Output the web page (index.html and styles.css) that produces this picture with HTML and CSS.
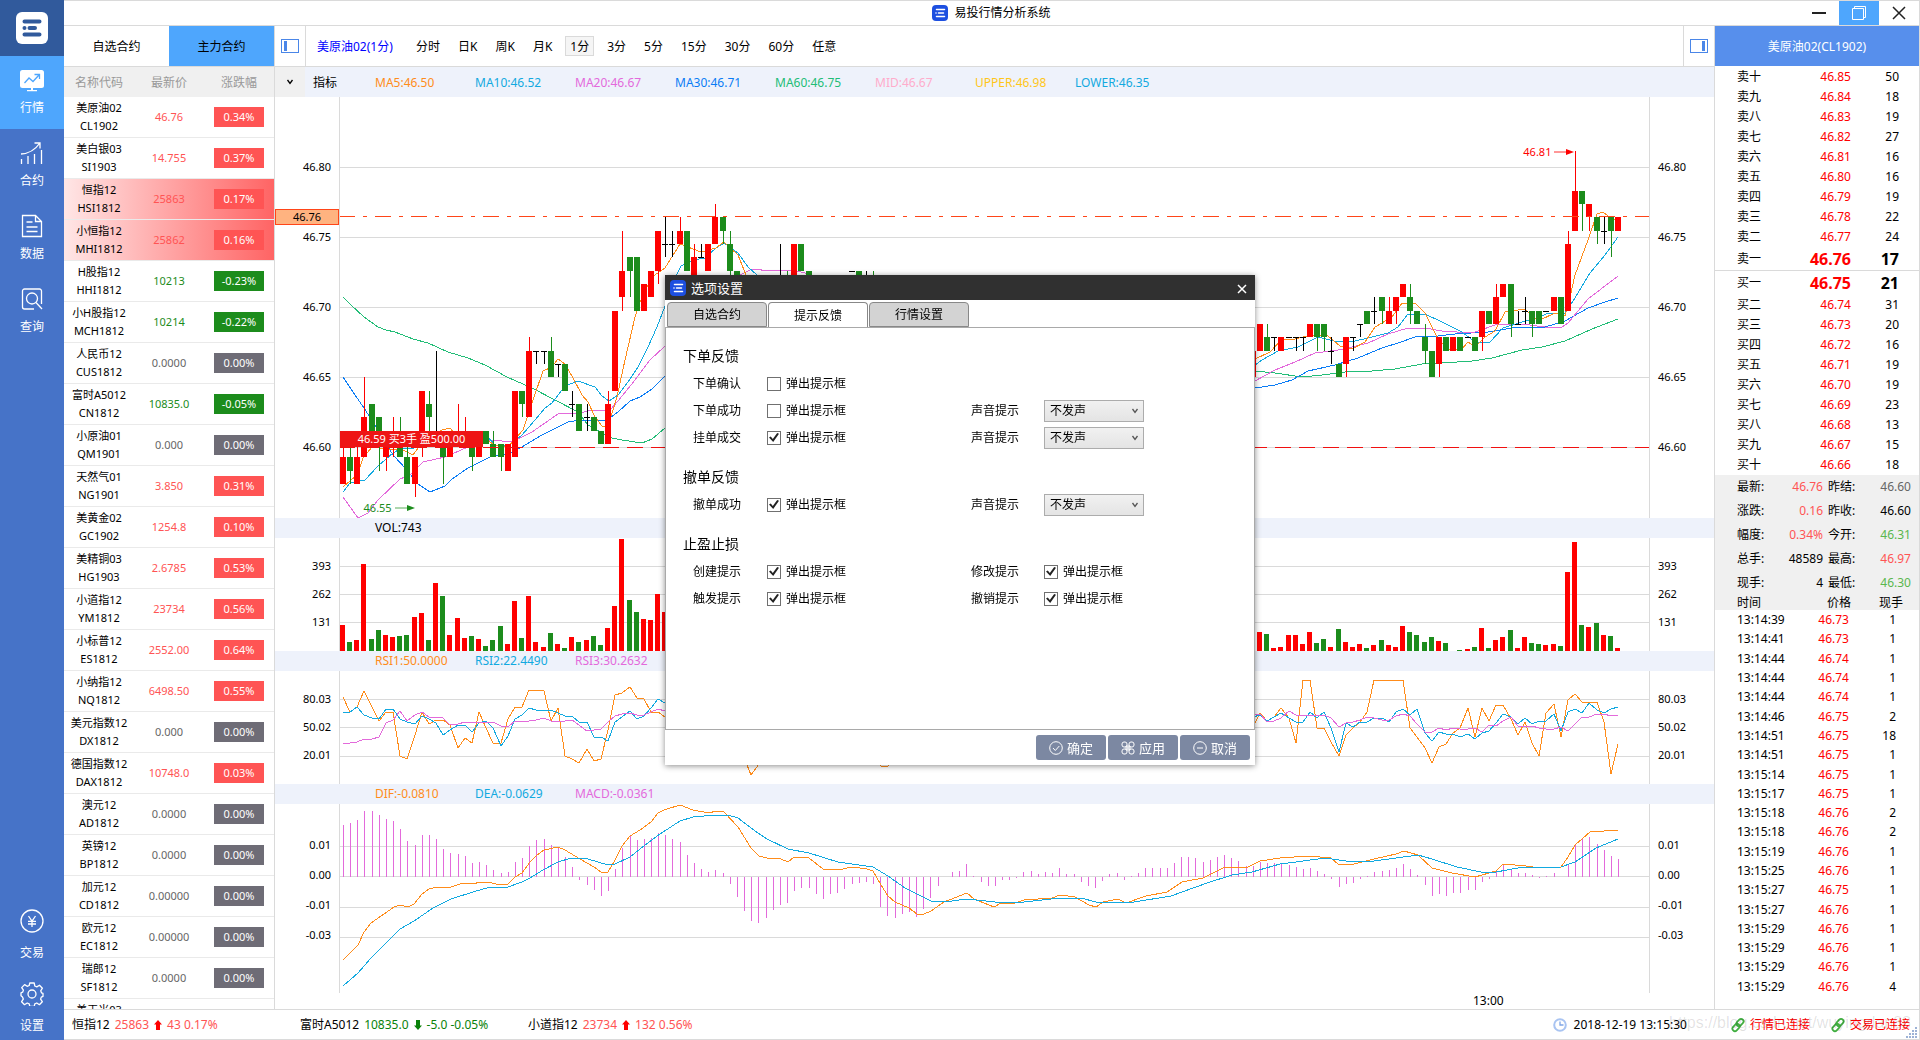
FILE: index.html
```html
<!DOCTYPE html>
<html lang="zh-CN">
<head>
<meta charset="utf-8">
<title>易投行情分析系统</title>
<link rel="stylesheet" href="styles.css">
</head>
<body>
<svg class="sprite" aria-hidden="true">
  <symbol id="brand" viewBox="0 0 16 16">
    <rect width="16" height="16" rx="4" fill="#1d4fe0"/>
    <path d="M4.500 4.500h8M6.500 8h5M4.500 11.500h8" stroke="#fff" stroke-width="1.500" stroke-linecap="round"/>
    <circle cx="4" cy="8" r="0.800" fill="#fff"/>
  </symbol>
  <symbol id="link" viewBox="0 0 16 16">
    <g fill="none" stroke="#3fae3f" stroke-width="1.800">
      <rect x="7.500" y="1.500" width="5" height="8" rx="2.500" transform="rotate(45 10 5.500)"/>
      <rect x="3.500" y="6.500" width="5" height="8" rx="2.500" transform="rotate(45 6 10.500)"/>
    </g>
  </symbol>
  <symbol id="up" viewBox="0 0 8 10"><path d="M4 0l4 4.500H6V10H2V4.500H0z" fill="#f00"/></symbol>
  <symbol id="down" viewBox="0 0 8 10"><path d="M4 10l4-4.500H6V0H2v5.500H0z" fill="#0a820a"/></symbol>
  <symbol id="chevron" viewBox="0 0 8 6"><path d="M1.500 1L4 4.500 6.500 1" fill="none" stroke="currentColor" stroke-width="1.300"/></symbol>
</svg>

<div class="app">
  <nav class="rail">
    <div class="rail-logo">
      <svg width="32" height="32" viewBox="0 0 32 32"><rect width="32" height="32" rx="6" fill="#fff"/><path d="M8.500 9.500h15M13.500 16h5.500M8.500 22.500h15" stroke="#315a9c" stroke-width="4" stroke-linecap="round"/><circle cx="8.500" cy="16" r="2" fill="#315a9c"/></svg>
    </div>
    <a class="rail-item active" href="#quotes">
      <svg viewBox="0 0 24 24"><rect y="2" width="24" height="18" rx="2.500" fill="#fff"/><path d="M11 20h2v2h4v1.200H7V22h4z" fill="#fff"/><path d="M4.500 15l4.500-5 4 3.500 6-6.500M14.500 6.500h5v4.500" fill="none" stroke="#4ea6fd" stroke-width="1.300"/></svg>
      <span>行情</span>
    </a>
    <a class="rail-item" href="#contracts">
      <svg viewBox="0 0 24 24" fill="none" stroke="#fff" stroke-width="1.300"><path d="M1.500 23v-5M8 23v-8M14.500 23V13M21.500 23V9M1 13C9 12.500 15 9 19.500 2.500M14.500 2h5.500v5.500"/></svg>
      <span>合约</span>
    </a>
    <a class="rail-item" href="#data">
      <svg viewBox="0 0 24 24" fill="none" stroke="#fff" stroke-width="1.300"><path d="M2.500 1.500h13l6 6v15h-19zM15.500 1.500v6h6M6.500 8h6M6.500 13h11M6.500 17.500h11"/></svg>
      <span>数据</span>
    </a>
    <a class="rail-item" href="#search">
      <svg viewBox="0 0 24 24" fill="none" stroke="#fff" stroke-width="1.300"><path d="M21.500 17V4a2 2 0 0 0-2-2h-15a2 2 0 0 0-2 2v16a2 2 0 0 0 2 2H14"/><circle cx="12" cy="11.500" r="5.500"/><path d="M16 15.500l6 6.500"/></svg>
      <span>查询</span>
    </a>
    <div class="rail-foot">
      <a class="rail-item" href="#trade">
        <svg viewBox="0 0 24 24" fill="none" stroke="#fff" stroke-width="1.300"><circle cx="12" cy="12" r="11"/><path d="M8.500 7l3.500 5 3.500-5M12 12v6M8 12.300h8M8 15h8"/></svg>
        <span>交易</span>
      </a>
      <a class="rail-item" href="#settings">
        <svg viewBox="0 0 24 24" fill="none" stroke="#fff" stroke-width="1.300"><circle cx="12" cy="12" r="4"/><path d="M9.800 1h4.400l.6 3 2 .9 2.700-1.700 2.900 3-1.700 2.600.8 2 1.500.6v3l-1.700.7-.7 2 1.700 2.600-2.900 3-2.600-1.700-2 .8-.6 2.600H9.800l-.6-2.600-2-.8-2.700 1.700-2.900-3 1.700-2.600-.8-2L1 13.800v-3l1.600-.6.8-2L1.700 5.600l2.900-3 2.600 1.700 2-.8z" stroke-linejoin="round"/></svg>
        <span>设置</span>
      </a>
    </div>
  </nav>

  <div class="window">
    <header class="titlebar">
      <h1><svg width="16" height="16"><use href="#brand"/></svg>易投行情分析系统</h1>
      <div class="window-controls">
        <button type="button" aria-label="最小化"><svg width="16" height="16"><path d="M1 8h14" stroke="#222" stroke-width="2"/></svg></button>
        <button type="button" class="restore" aria-label="还原"><svg width="16" height="16" fill="none" stroke="#fff"><path d="M1.500 3.500h11v11h-11zM3.500 3.500v-2h11v11h-2"/></svg></button>
        <button type="button" aria-label="关闭"><svg width="16" height="16"><path d="M2 2l12 12M14 2L2 14" stroke="#222" stroke-width="1.500"/></svg></button>
      </div>
    </header>

    <div class="workspace">
      <aside class="watchlist">
        <div class="list-tabs">
          <button type="button">自选合约</button>
          <button type="button" class="active">主力合约</button>
        </div>
        <div class="list-scroll">
          <table class="quotes">
            <thead><tr><th>名称代码</th><th>最新价</th><th>涨跌幅</th></tr></thead>
            <tbody id="quotes"></tbody>
          </table>
        </div>
      </aside>

      <main class="charts">
        <div class="toolbar">
          <button type="button" class="panel-toggle" aria-label="左侧面板"><svg width="18" height="14" viewBox="0 0 18 14"><rect x="0.500" y="0.500" width="17" height="13" fill="#fff" stroke="#4a86e8"/><path d="M3 2h3v10H3z" fill="#4a86e8"/></svg></button>
          <span class="symbol">美原油02(1分)</span>
          <div class="periods">
            <button type="button">分时</button>
            <button type="button">日K</button>
            <button type="button">周K</button>
            <button type="button">月K</button>
            <button type="button" class="active">1分</button>
            <button type="button">3分</button>
            <button type="button">5分</button>
            <button type="button">15分</button>
            <button type="button">30分</button>
            <button type="button">60分</button>
            <button type="button">任意</button>
          </div>
          <button type="button" class="panel-toggle right" aria-label="右侧面板"><svg width="18" height="14" viewBox="0 0 18 14"><rect x="0.500" y="0.500" width="17" height="13" fill="#fff" stroke="#4a86e8"/><path d="M12 2h3v10h-3z" fill="#4a86e8"/></svg></button>
        </div>

        <div class="indicators">
          <button type="button" class="indicator-menu" aria-label="选择指标"><svg width="8" height="6"><use href="#chevron"/></svg></button>
          <span class="indicator-label">指标</span>
          <span class="legend orange">MA5:46.50</span>
          <span class="legend cyan">MA10:46.52</span>
          <span class="legend magenta">MA20:46.67</span>
          <span class="legend blue">MA30:46.71</span>
          <span class="legend green">MA60:46.75</span>
          <span class="legend pink">MID:46.67</span>
          <span class="legend yellow">UPPER:46.98</span>
          <span class="legend cyan">LOWER:46.35</span>
        </div>
        <section class="pane price-pane">
          <div class="axis"><span>46.80</span><span>46.75</span><span>46.70</span><span>46.65</span><span>46.60</span><b class="last-price">46.76</b></div>
          <div class="plot">
            <svg id="price" viewBox="340 97 1309 421" preserveAspectRatio="none"></svg>
            <span class="position">46.59 买3手 盈500.00</span>
            <span class="mark low">46.55 <svg width="20" height="8"><path d="M0 4h14" stroke="#5aae5a"/><path d="M12 1l8 3-8 3z" fill="#1c8c1c"/></svg></span>
            <span class="mark high">46.81 <svg width="20" height="8"><path d="M0 4h14" stroke="#ff3030"/><path d="M12 1l8 3-8 3z" fill="#f00"/></svg></span>
          </div>
          <div class="axis right"><span>46.80</span><span>46.75</span><span>46.70</span><span>46.65</span><span>46.60</span></div>
        </section>

        <div class="pane-head"><span class="legend">VOL:743</span></div>
        <section class="pane volume-pane">
          <div class="axis"><span>393</span><span>262</span><span>131</span></div>
          <div class="plot"><svg id="volume" viewBox="340 538 1309 113" preserveAspectRatio="none"></svg></div>
          <div class="axis right"><span>393</span><span>262</span><span>131</span></div>
        </section>

        <div class="pane-head"><span class="legend orange">RSI1:50.0000</span><span class="legend cyan">RSI2:22.4490</span><span class="legend magenta">RSI3:30.2632</span></div>
        <section class="pane rsi-pane">
          <div class="axis"><span>80.03</span><span>50.02</span><span>20.01</span></div>
          <div class="plot"><svg id="rsi" viewBox="340 671 1309 113" preserveAspectRatio="none"></svg></div>
          <div class="axis right"><span>80.03</span><span>50.02</span><span>20.01</span></div>
        </section>

        <div class="pane-head"><span class="legend orange">DIF:-0.0810</span><span class="legend cyan">DEA:-0.0629</span><span class="legend magenta">MACD:-0.0361</span></div>
        <section class="pane macd-pane">
          <div class="axis"><span>0.01</span><span>0.00</span><span>-0.01</span><span>-0.03</span></div>
          <div class="plot"><svg id="macd" viewBox="340 804 1309 189" preserveAspectRatio="none"></svg></div>
          <div class="axis right"><span>0.01</span><span>0.00</span><span>-0.01</span><span>-0.03</span></div>
        </section>
        <div class="time-axis"><span>13:00</span></div>
      </main>

      <aside class="depth">
        <h2>美原油02(CL1902)</h2>
        <table class="book"><tbody id="asks"></tbody><tbody id="bids"></tbody></table>
        <table class="stats">
          <tbody>
            <tr><th>最新:</th><td class="up">46.76</td><th>昨结:</th><td class="flat">46.60</td></tr>
            <tr><th>涨跌:</th><td class="up">0.16</td><th>昨收:</th><td>46.60</td></tr>
            <tr><th>幅度:</th><td class="up">0.34%</td><th>今开:</th><td class="down">46.31</td></tr>
            <tr><th>总手:</th><td>48589</td><th>最高:</th><td class="up">46.97</td></tr>
            <tr><th>现手:</th><td>4</td><th>最低:</th><td class="down">46.30</td></tr>
          </tbody>
        </table>
        <div class="tick-area">
          <table class="ticks">
            <thead><tr><th>时间</th><th>价格</th><th>现手</th></tr></thead>
            <tbody id="ticks"></tbody>
          </table>
        </div>
      </aside>
    </div>

    <footer class="statusbar">
      <div class="index">恒指12 <span class="rise">25863</span><svg width="8" height="10"><use href="#up"/></svg><span class="rise">43 0.17%</span></div>
      <div class="index">富时A5012 <span class="fall">10835.0</span><svg width="8" height="10"><use href="#down"/></svg><span class="fall">-5.0 -0.05%</span></div>
      <div class="index">小道指12 <span class="rise">23734</span><svg width="8" height="10"><use href="#up"/></svg><span class="rise">132 0.56%</span></div>
      <div class="clock"><svg width="14" height="14" fill="none"><circle cx="7" cy="7" r="5.800" stroke="#a9c4f2" stroke-width="2"/><path d="M7 3.500V7h3.500" stroke="#7fa5e6" stroke-width="1.300"/></svg>2018-12-19 13:15:30</div>
      <div class="link"><svg width="16" height="16"><use href="#link"/></svg>行情已连接</div>
      <div class="link"><svg width="16" height="16"><use href="#link"/></svg>交易已连接</div>
      <span class="watermark">https://blog.csdn.net/wuyingdan88</span>
      <svg class="grip" width="11" height="11" fill="#9db2d6"><path d="M9 0h2v2H9zM6 3h2v2H6zM9 3h2v2H9zM3 6h2v2H3zM6 6h2v2H6zM9 6h2v2H9zM0 9h2v2H0zM3 9h2v2H3zM6 9h2v2H6zM9 9h2v2H9z"/></svg>
    </footer>
  </div>
</div>

<div class="overlay">
  <form class="dialog" role="dialog" aria-labelledby="dialog-title">
    <header class="dialog-title">
      <svg width="16" height="16"><use href="#brand"/></svg>
      <h2 id="dialog-title">选项设置</h2>
      <button type="button" aria-label="关闭"><svg width="10" height="10"><path d="M1 1l8 8M9 1L1 9" stroke="#fff" stroke-width="1.500"/></svg></button>
    </header>
    <div class="dialog-tabs">
      <button type="button">自选合约</button>
      <button type="button" class="active">提示反馈</button>
      <button type="button">行情设置</button>
    </div>
    <div class="dialog-body">
      <h3>下单反馈</h3>
      <div class="option"><span>下单确认</span><label><input type="checkbox">弹出提示框</label></div>
      <div class="option"><span>下单成功</span><label><input type="checkbox">弹出提示框</label><label for="sound1">声音提示</label><div class="select"><select id="sound1"><option>不发声</option></select><svg width="8" height="6"><use href="#chevron"/></svg></div></div>
      <div class="option"><span>挂单成交</span><label><input type="checkbox" checked>弹出提示框</label><label for="sound2">声音提示</label><div class="select"><select id="sound2"><option>不发声</option></select><svg width="8" height="6"><use href="#chevron"/></svg></div></div>
      <h3>撤单反馈</h3>
      <div class="option"><span>撤单成功</span><label><input type="checkbox" checked>弹出提示框</label><label for="sound3">声音提示</label><div class="select"><select id="sound3"><option>不发声</option></select><svg width="8" height="6"><use href="#chevron"/></svg></div></div>
      <h3>止盈止损</h3>
      <div class="option"><span>创建提示</span><label><input type="checkbox" checked>弹出提示框</label><span>修改提示</span><label><input type="checkbox" checked>弹出提示框</label></div>
      <div class="option"><span>触发提示</span><label><input type="checkbox" checked>弹出提示框</label><span>撤销提示</span><label><input type="checkbox" checked>弹出提示框</label></div>
    </div>
    <footer class="dialog-actions">
      <button type="button"><svg width="14" height="14" fill="none" stroke="#fff"><circle cx="7" cy="7" r="6.300"/><path d="M4 7l2.300 2.500L10.300 5"/></svg>确定</button>
      <button type="button"><svg width="14" height="14" fill="none" stroke="#fff"><rect x="1" y="1" width="5" height="5" rx="2"/><rect x="8" y="1" width="5" height="5" rx="2"/><rect x="1" y="8" width="5" height="5" rx="2"/><rect x="8" y="8" width="5" height="5" rx="2"/><path d="M6 4v6M8 4v6M4 6h6M4 8h6"/></svg>应用</button>
      <button type="button"><svg width="14" height="14" fill="none" stroke="#fff"><circle cx="7" cy="7" r="6.300"/><path d="M4 7h6"/></svg>取消</button>
    </footer>
  </form>
</div>
<script src="script.js"></script>
</body>
</html>
```

FILE: styles.css
```css
* { box-sizing: border-box; }

body {
  margin: 0;
  color: #000;
  background: #fff;
  font: 12px/20px "Noto Sans", "Noto Sans CJK SC", sans-serif;
}

h1, h2, h3 { margin: 0; font-size: inherit; font-weight: normal; }
button { padding: 0; border: 0; background: none; color: inherit; font: inherit; }
table { width: 100%; border-spacing: 0; table-layout: fixed; }
th, td { padding: 0; font-weight: normal; }
svg { flex: none; }
.sprite { position: absolute; width: 0; height: 0; }

.app { display: flex; height: 100vh; overflow: hidden; }

/* navigation rail */
.rail { display: flex; flex-direction: column; flex: none; width: 64px; background: #4673c8; }
.rail-logo { display: grid; place-items: center; height: 56px; background: #315a9c; }
.rail-item {
  display: flex;
  flex-direction: column;
  align-items: center;
  gap: 6px;
  padding: 12px 0 11px;
  color: #fff;
  text-decoration: none;
}
.rail-item svg { width: 24px; height: 24px; }
.rail-item.active { background: #4ea6fd; }
.rail-foot { display: grid; gap: 11px; margin-top: auto; padding-bottom: 4px; }
.rail-foot .rail-item { gap: 10px; padding: 8px 0 0; }

/* window frame */
.window {
  display: flex;
  flex-direction: column;
  flex: 1;
  min-width: 0;
  border: solid #dadada;
  border-width: 1px 1px 1px 0;
}
.titlebar {
  display: grid;
  grid-template-columns: 1fr auto 1fr;
  height: 25px;
  border-bottom: 1px solid #dadada;
}
.titlebar h1 { grid-column: 2; display: flex; align-items: center; gap: 6px; }
.window-controls { display: flex; justify-content: flex-end; }
.window-controls button { display: grid; place-items: center; width: 40px; }
.window-controls .restore { background: #4ea6fd; }
.workspace { display: flex; flex: 1; min-height: 0; }

/* contract list */
.watchlist { display: flex; flex-direction: column; flex: none; width: 211px; border-right: 1px solid #dadada; }
.list-tabs { display: grid; grid-template-columns: 1fr 1fr; flex: none; height: 41px; border-bottom: 1px solid #dadada; }
.list-tabs button { padding-top: 2px; }
.list-tabs .active { background: #4ea6fd; }
.list-scroll { flex: 1; min-height: 0; overflow: hidden; }
.quotes { font-size: 11px; text-align: center; }
.quotes thead th { height: 30px; padding-top: 2px; background: #f0f0f0; color: #999; font-size: 12px; }
.quotes tbody td { height: 41px; border-bottom: 1px solid #eaeaea; }
.quotes td { line-height: 18px; }
.quotes td:first-child span { display: block; }
.quotes .pct { display: block; width: 50px; margin: 0 auto; color: #fff; line-height: 20px; background: #6e6c76; }
.quotes .flat { color: #666; }
.quotes .up { color: #ff5454; }
.quotes .down { color: #1c8c1c; }
.quotes .up + td .pct { background: #ff5454; }
.quotes .down + td .pct { background: #1c8c1c; }
.quotes .flash { background: linear-gradient(90deg, #ffe6e6, #ff6464); }

/* chart column */
.charts { display: flex; flex-direction: column; flex: 1; min-width: 0; border-right: 1px solid #dadada; }
.toolbar { display: flex; align-items: center; height: 41px; border-bottom: 1px solid #dadada; }
.panel-toggle { display: grid; place-items: center; align-self: stretch; width: 31px; border-right: 1px solid #dadada; }
.panel-toggle.right { margin-left: auto; border: solid #dadada; border-width: 0 0 0 1px; }
.symbol { width: 105px; padding: 2px 0 0 11px; color: #00f; white-space: nowrap; }
.periods { display: flex; gap: 8px; }
.periods button { padding: 2px 4px 0; border: 1px solid transparent; line-height: 16px; }
.periods .active { border-color: #dadada; background: #f5f5f5; }

.indicators { display: flex; height: 30px; line-height: 32px; background: #eef2fb; }
.indicator-menu { display: grid; place-items: center; width: 30px; background: #f0f0f0; }
.indicator-label { width: 70px; padding-left: 8px; }
.pane-head { display: flex; height: 20px; padding-left: 100px; background: #eef2fb; }
.legend { width: 100px; white-space: nowrap; }
.orange { color: #ff8c1a; }
.cyan { color: #12a9e0; }
.magenta { color: #e36adb; }
.blue { color: #0a7cf5; }
.green { color: #22bd77; }
.pink { color: #ffaccb; }
.yellow { color: #ffc61a; }

.pane { display: grid; grid-template-columns: 64px 1fr 64px; }
.axis { position: relative; display: flex; flex-direction: column; padding-right: 8px; font-size: 11px; text-align: right; }
.axis.right { padding: 0 0 0 8px; text-align: left; }
.price-pane { height: 421px; }
.volume-pane, .rsi-pane { height: 113px; }
.macd-pane { height: 189px; }
.price-pane .axis { padding-top: 35px; line-height: 70px; }
.volume-pane .axis, .rsi-pane .axis { padding-top: 14px; line-height: 28px; }
.macd-pane .axis { padding-top: 26px; line-height: 30px; }
.last-price {
  position: absolute;
  top: 112px;
  left: 0;
  width: 64px;
  border: 1px solid #ff4518;
  background: #ffb380;
  font-weight: normal;
  line-height: 14px;
  text-align: center;
}
.plot { position: relative; border: solid #dadada; border-width: 0 1px; overflow: hidden; }
.plot > svg { display: block; width: 100%; height: 100%; shape-rendering: crispEdges; }
.position {
  position: absolute;
  top: 334px;
  left: 0;
  width: 143px;
  color: #fff;
  background: #ee1515;
  font-size: 11px;
  line-height: 16px;
  text-align: center;
}
.mark { position: absolute; font-size: 11px; line-height: 16px; white-space: nowrap; }
.mark.low { top: 403px; left: 1.8%; color: #1c8c1c; }
.mark.high { top: 47px; left: 90.4%; color: #f00; }
.time-axis { flex: 1; padding: 0 64px; line-height: 16px; }
.time-axis span { margin-left: 86.5%; }

.grid { stroke: #dadada; }
.line { fill: none; stroke: currentColor; }
.red { fill: #f00; }
.dark { fill: #000; }
.forest { fill: #1c8c1c; }
.violet { fill: #e36adb; }
.last-line { stroke: #ff4518; stroke-dasharray: 16 8 4 8; }
.cost-line { stroke: #f01010; stroke-dasharray: 16 8; }

/* order book */
.depth { display: flex; flex-direction: column; flex: none; width: 204px; }
.depth h2 { flex: none; height: 40px; margin-bottom: 1px; color: #fff; line-height: 42px; text-align: center; background: #578fec; }
.book td { height: 20px; text-align: right; }
.book td:first-child, .ticks td:first-child, .ticks th:first-child { padding-left: 22px; text-align: left; }
.book td:nth-child(1) { width: 60px; }
.book td:nth-child(2) { width: 76px; color: #f00; }
.book td:nth-child(3) { padding-right: 20px; }
.book .best td { height: 24px; }
.book .best td + td { font-size: 16px; font-weight: bold; }
.book #asks .best td { border-bottom: 1px solid #dadada; }

.stats { background: #f0f0f0; }
.stats tr { height: 24px; }
.stats th { padding-left: 22px; text-align: left; }
.stats th:nth-child(1) { width: 54px; }
.stats td:nth-child(2) { width: 54px; }
.stats th:nth-child(3) { width: 40px; padding-left: 5px; }
.stats td { text-align: right; }
.stats td:last-child { padding-right: 8px; }
.stats .up { color: #ff5454; }
.stats .down { color: #5ab74e; }
.stats .flat { color: #666; }

.tick-area { flex: 1; min-height: 0; padding-bottom: 13px; }
.ticks { height: 100%; line-height: 15px; }
.ticks thead tr { height: 15px; background: #f0f0f0; }
.ticks th, .ticks td { text-align: right; }
.ticks th:first-child { width: 80px; }
.ticks th:nth-child(2) { width: 56px; }
.ticks th:last-child { padding-right: 16px; }
.ticks td:nth-child(2) { padding-right: 2px; color: #f00; }
.ticks td:last-child { padding-right: 23px; }

/* status bar */
.statusbar {
  position: relative;
  display: flex;
  align-items: center;
  flex: none;
  height: 30px;
  padding: 0 9px 0 8px;
  border-top: 1px solid #dadada;
  white-space: nowrap;
}
.index { display: flex; align-items: center; gap: 5px; width: 228px; }
.rise { color: #ff5454; }
.fall { color: #0a820a; }
.clock { display: flex; align-items: center; gap: 7px; margin-left: auto; margin-right: 43px; }
.link { display: flex; align-items: center; gap: 4px; color: #f00; }
.link + .link { margin-left: 20px; }
.watermark {
  position: absolute;
  right: 8px;
  top: 2px;
  color: rgba(0, 0, 0, 0.12);
  font: 16px/22px "Liberation Sans", sans-serif;
}
.grip { position: absolute; right: 2px; bottom: 1px; }

/* settings dialog */
.overlay { position: fixed; inset: 0; display: grid; place-items: center; }
.dialog {
  display: flex;
  flex-direction: column;
  width: 590px;
  min-height: 490px;
  background: #fff;
  box-shadow: 0 1px 6px rgba(0, 0, 0, 0.45);
}
.dialog-title { display: flex; align-items: center; gap: 5px; height: 25px; padding: 0 7px 0 5px; color: #fff; background: #303030; }
.dialog-title h2 { font-size: 13px; }
.dialog-title button { display: grid; place-items: center; width: 12px; height: 20px; margin-left: auto; padding-top: 2px; }
.dialog-tabs { display: flex; gap: 1px; padding: 2px 2px 0; }
.dialog-tabs button {
  width: 100px;
  height: 25px;
  border: 1px solid #888;
  border-radius: 4px 4px 0 0;
  background: #d3d3d3;
}
.dialog-tabs .active { padding-top: 2px; border-bottom: 0; background: #fff; }
.dialog-body { flex: 1; padding: 14px 17px; border: 1px solid #a9a9a9; }
.dialog-body h3 { font-size: 14px; line-height: 28px; }
.option + h3 { margin-top: 12px; }
.option { display: grid; grid-template-columns: 74px 204px 73px 100px; align-items: center; height: 27px; padding-left: 10px; }
.option label { display: flex; align-items: center; gap: 5px; }
.option input {
  display: grid;
  place-items: center;
  appearance: none;
  width: 14px;
  height: 14px;
  margin: 0;
  border: 1px solid #707070;
  background: #fff;
}
.option input:checked::before {
  content: "";
  width: 10px;
  height: 9px;
  background: #222;
  clip-path: polygon(0 50%, 18% 38%, 38% 68%, 82% 0, 100% 8%, 42% 100%);
}
.select { display: grid; align-items: center; color: #555; }
.select > * { grid-area: 1 / 1; }
.select select {
  appearance: none;
  width: 100px;
  height: 22px;
  padding: 0 5px;
  border: 1px solid #acacac;
  border-radius: 0;
  color: #000;
  background: linear-gradient(#f1f1f1, #e4e4e4);
  font: inherit;
}
.select svg { justify-self: end; margin-right: 5px; pointer-events: none; }
.dialog-actions { display: flex; justify-content: flex-end; gap: 2px; padding: 5px; }
.dialog-actions button {
  display: flex;
  align-items: center;
  justify-content: center;
  gap: 4px;
  width: 70px;
  height: 25px;
  border-radius: 3px;
  color: #fff;
  background: #7c88a2;
  font-size: 13px;
}
```

FILE: script.js
```js
// ---- contract list: name, code, price, change %, direction, flash ----
const quotes = [
  ['美原油02', 'CL1902', '46.76', '0.34%', 'up'],
  ['美白银03', 'SI1903', '14.755', '0.37%', 'up'],
  ['恒指12', 'HSI1812', '25863', '0.17%', 'up', 'flash'],
  ['小恒指12', 'MHI1812', '25862', '0.16%', 'up', 'flash'],
  ['H股指12', 'HHI1812', '10213', '-0.23%', 'down'],
  ['小H股指12', 'MCH1812', '10214', '-0.22%', 'down'],
  ['人民币12', 'CUS1812', '0.0000', '0.00%', 'flat'],
  ['富时A5012', 'CN1812', '10835.0', '-0.05%', 'down'],
  ['小原油01', 'QM1901', '0.000', '0.00%', 'flat'],
  ['天然气01', 'NG1901', '3.850', '0.31%', 'up'],
  ['美黄金02', 'GC1902', '1254.8', '0.10%', 'up'],
  ['美精铜03', 'HG1903', '2.6785', '0.53%', 'up'],
  ['小道指12', 'YM1812', '23734', '0.56%', 'up'],
  ['小标普12', 'ES1812', '2552.00', '0.64%', 'up'],
  ['小纳指12', 'NQ1812', '6498.50', '0.55%', 'up'],
  ['美元指数12', 'DX1812', '0.000', '0.00%', 'flat'],
  ['德国指数12', 'DAX1812', '10748.0', '0.03%', 'up'],
  ['澳元12', 'AD1812', '0.0000', '0.00%', 'flat'],
  ['英镑12', 'BP1812', '0.0000', '0.00%', 'flat'],
  ['加元12', 'CD1812', '0.00000', '0.00%', 'flat'],
  ['欧元12', 'EC1812', '0.00000', '0.00%', 'flat'],
  ['瑞郎12', 'SF1812', '0.0000', '0.00%', 'flat'],
  ['美玉米03', '', '', '', 'flat']
];
const put = (id, html) => { document.getElementById(id).innerHTML = html; };
put('quotes', quotes.map(([name, code, price, pct, dir, flash = '']) =>
  `<tr class="${flash}"><td><span>${name}</span><span>${code || '&nbsp;'}</span></td><td class="${dir}">${price}</td><td>${pct && `<span class="pct">${pct}</span>`}</td></tr>`).join(''));

// ---- order book ----
const digits = '一二三四五六七八九十';
const bookRow = (label, price, size, best) =>
  `<tr class="${best ? 'best' : ''}"><td>${label}</td><td>${price.toFixed(2)}</td><td>${size}</td></tr>`;
put('asks', [50, 18, 19, 27, 16, 16, 19, 22, 24, 17].map((size, i) =>
  bookRow('卖' + digits[9 - i], 46.85 - i / 100, size, i === 9)).join(''));
put('bids', [21, 31, 20, 16, 19, 19, 23, 13, 15, 18].map((size, i) =>
  bookRow('买' + digits[i], 46.75 - i / 100, size, i === 0)).join(''));

// ---- tick list ----
const ticks = `14:39 73 1,14:41 73 1,14:44 74 1,14:44 74 1,14:44 74 1,14:46 75 2,14:51 75 18,14:51 75 1,15:14 75 1,15:17 75 1,
15:18 76 2,15:18 76 2,15:19 76 1,15:25 76 1,15:27 75 1,15:27 76 1,15:29 76 1,15:29 76 1,15:29 76 1,15:29 76 4`;
put('ticks', ticks.split(',').map(row => {
  const [time, cents, size] = row.trim().split(' ');
  return `<tr><td>13:${time}</td><td>46.${cents}</td><td>${size}</td></tr>`;
}).join(''));

// ---- chart helpers ----
const LEFT = 339, RIGHT = 1650;
const x = i => Math.round(343 + i * 7.163);
const levelY = n => Math.round(484 - n * 40 / 3);
const fill = { R: 'red', G: 'forest', K: 'dark' };
const rect = (cls, left, top, width, height) => `<rect class="${cls}" x="${left}" y="${top}" width="${width}" height="${height}"/>`;
const hline = (y, cls = 'grid') => `<path class="${cls}" d="M${LEFT} ${y + 0.5}H${RIGHT}"/>`;
const line = (cls, points) => `<polyline class="line ${cls}" points="${points}"/>`;
const series = (cls, start, values) => line(cls, values.map((v, i) => `${x(start + i)},${v}`).join(' '));

// ---- candles: index, colour, body top, body bottom, high, low (tick levels) ----
const candles = `0R2,0,4,0 1G2,1,4,0 2R2,0,4,0 3R5,2,8,2 4G6,4,6,4 5G5,4,5,1 6R3,2,3,1 7R4,3,5,2 8G3,2,5,2 9G2,0,4,0 10R2,0,2,-1
11R7,3,7,2 12G6,5,7,4 13K4,4,10,4 14G3,2,4,0 15R3,2,4,2 16R4,3,6,3 17R4,3,5,3 18G3,2,4,1 19R4,2,4,2 20G4,3,4,3 21G3,2,4,2 22G3,2,3,1
23R3,1,3,1 24R7,2,7,2 25G7,6,7,5 26R10,5,11,5 27K10,10,10,9 28K10,10,10,9 29G10,8,11,8 30K9,9,9,8 31G9,7,9,7 32K6,6,7,5 33G6,4,6,4
34K5,5,6,4 35G5,4,5,4 36G4,3,4,3 37R6,3,7,3 38R13,7,13,7 39R16,14,19,13 40G17,16,17,14 41G17,13,17,13 42R15,13,15,13 43R16,14,16,14
44R19,16,19,15 45K18,18,20,17 46K18,18,19,17 47R19,18,20,18 48G19,16,19,16 49R17,15,18,15 50K17,17,18,17 51R18,16,18,16 52R20,18,21,18
53G20,19,20,18 54G18,16,19,15 55G16,14,16,14 61K15,15,18,14 62G15,14,16,14 63R18,15,18,15 64G18,16,18,16 65G16,14,16,14 71K16,16,16,16
72G16,14,16,14 73K15,15,16,14 74G15,14,16,14 127R10,8,10,8 128R12,10,12,10 129G11,10,12,10 130K11,11,11,10 131R11,10,11,10
132K11,11,11,11 133K11,11,11,10 134K11,11,11,10 135R12,11,12,11 136G12,11,12,10 137G12,11,12,10 138K10,10,11,9 139G9,8,9,8 140R11,9,11,8
141K11,11,11,10 142K12,12,12,11 143G13,12,13,12 144K13,13,14,12 145G14,13,14,12 146R13,12,14,12 147R14,13,14,12 148R15,14,15,14
149G14,13,15,12 150G13,12,13,12 151G11,10,12,9 152G10,8,10,8 153R11,9,11,8 154G11,10,11,10 155R11,10,11,10 156G11,10,11,10
157K11,11,11,11 158G11,10,11,10 159R13,11,13,10 160G13,12,13,12 161R14,12,15,12 162R15,14,15,14 163G15,12,15,11 164K12,12,13,12
165K13,13,14,12 166G13,12,13,11 167G13,12,13,12 168K13,13,13,13 169R14,13,14,13 170G14,12,14,12 171R18,13,19,13 172R22,19,25,19
173G22,21,22,19 174R21,20,21,19 175G20,19,20,18 176K19,19,20,18 177G20,19,20,17 178R20,19,20,19`;
const candleShapes = candles.split(/\s+/).map(text => {
  const [, i, colour, rest] = text.match(/^(\d+)([RGK])(.*)$/);
  const [top, bottom, high, low] = rest.split(',').map(n => levelY(+n));
  const cx = x(+i);
  const body = colour === 'K' ? rect('dark', cx - 3, top, 6, 1) : rect(fill[colour], cx - 3, top, 6, bottom - top);
  return body + rect(fill[colour], cx, high, 1, low - high);
}).join('');

put('price', [167, 237, 307, 377, 447].map(y => hline(y)).join('') +
  line('green', '343,297 350,304 364,317 378,327 386,330 395,332 413,339 428,343 448,352 468,358 485,365 507,377 532,388 555,400 578,412 588,425 602,433 612,438 622,440 642,443 652,439 665,428') +
  line('green', '1255,371 1275,373 1302,377 1322,375 1345,372 1372,371 1395,369 1422,364 1442,363 1472,361 1492,358 1522,350 1542,347 1565,341 1592,329 1618,319') +
  line('blue', '343,377 355,395 364,408 378,430 393,455 407,470 418,484 430,492 445,486 452,479 468,468 492,456 508,454 522,447 542,435 568,422 580,420 607,420 618,412 630,401 640,397 652,389 665,376') +
  line('blue', '1255,388 1275,385 1292,380 1308,371 1335,365 1358,358 1382,348 1398,343 1418,336 1438,336 1455,334 1488,332 1512,328 1545,327 1565,321 1588,308 1605,302 1618,298') +
  line('magenta', '343,497 358,518 368,513 378,500 400,479 410,475 423,462 445,457 468,447 492,440 512,442 532,432 558,414 580,413 592,410 610,410 618,401 635,380 650,360 665,346 740,275 752,269 771,271 793,270 805,273 815,280') +
  line('magenta', '1255,381 1275,370 1295,362 1315,353 1338,350 1352,347 1368,343 1388,334 1408,328 1425,328 1442,331 1472,333 1498,324 1522,324 1545,327 1562,327 1568,323 1588,299 1618,276') +
  line('cyan', '343,492 350,483 365,480 378,466 393,453 402,448 413,449 422,442 435,433 486,435 495,445 508,446 522,435 535,420 545,408 552,403 565,386 578,381 595,387 602,396 609,401 618,395 628,382 638,367 648,347 657,327 665,306 677,274 681,266 693,260 705,258 716,248 724,243 738,253 748,267 757,275 765,290') +
  line('cyan', '1255,365 1262,360 1278,351 1298,347 1318,337 1338,342 1355,341 1368,338 1388,333 1398,327 1408,314 1425,314 1442,322 1462,332 1475,342 1490,342 1503,328 1522,322 1535,319 1548,313 1565,313 1575,298 1590,273 1605,255 1618,237') +
  line('orange', '343,487 357,475 363,458 372,447 405,451 413,455 422,443 442,430 450,428 457,437 478,435 495,445 508,447 523,430 533,400 543,371 552,367 558,359 565,364 573,378 582,395 588,402 595,417 602,426 608,426 617,397 625,360 635,317 640,302 652,277 665,268 680,244 701,252 716,248 724,242 738,255 746,275') +
  line('orange', '1255,359 1270,352 1282,339 1295,339 1312,335 1328,336 1340,346 1352,349 1365,342 1375,327 1392,317 1402,303 1415,303 1425,313 1437,337 1448,350 1462,349 1468,342 1475,347 1485,337 1495,331 1505,312 1525,309 1538,321 1555,313 1565,316 1570,297 1575,275 1588,240 1597,214 1603,212 1608,216 1618,221') +
  candleShapes + hline(216, 'last-line') + hline(447, 'cost-line'));

// ---- volume: runs of coloured bar heights from a start index ----
const volumeRuns = {
  0: 'R26 G9 R11 R87 G12 G21 R16 R14 G15 G16 R34 R38 G11 R68 G55 R16 R33 R13 G15 R12 G5 G11 G25 R7 R50 G13 R55 R9 R4 G18 R7 G3 R14 G9 R11 G15 G6 R23 R45 R112 G51 G39 R32 R31 R57 R39',
  127: 'R7 R19 G17 R3 R4 R16 R16 R7 R19 G8 G12 R4 G22 R9 R4 R7 G3 R6 G11 R6 R4 R25 G19 G16 G9 G14 R10 G8 R0 G1 R2 G4 R23 G3 R11 R14 G21 R3 R14 G8 G7 R6 R7 G5 R79 R109 G26 R24 G28 R16 G15 R3'
};
put('volume', [566, 594, 622].map(y => hline(y)).join('') +
  Object.entries(volumeRuns).map(([start, run]) => run.split(' ').map((bar, i) => {
    const h = +bar.slice(1);
    return rect(fill[bar[0]], x(+start + i) - 3, 651 - h, 5, h);
  }).join('')).join(''));

// ---- RSI ----
put('rsi', [699, 727, 756].map(y => hline(y)).join('') +
  series('orange', 0, [697,712,707,691,707,721,712,712,756,759,735,712,724,720,720,725,748,738,743,712,728,743,743,719,707,707,690,690,691,721,708,756,759,763,749,761,759,730,695,693,687,698,699,712,712,717]) +
  line('orange', '745,760 751,775 759,764') + line('orange', '879,760 881,766 888,766 890,760') +
  series('orange', 127, [727,713,721,717,708,718,743,680,680,728,728,742,756,735,728,722,712,680,680,680,680,680,728,737,748,763,747,744,733,728,708,737,708,721,705,705,719,735,722,743,756,713,704,737,700,694,702,702,702,722,774,744]) +
  series('cyan', 0, [712,712,707,715,718,719,709,709,719,722,724,716,719,723,735,730,725,725,732,723,721,728,746,736,719,715,708,710,710,710,713,716,716,722,722,737,737,741,722,717,711,719,716,708,699,703]) +
  series('cyan', 127, [717,715,721,717,713,718,722,722,712,718,712,728,752,723,727,722,722,718,718,722,712,709,715,709,733,741,732,734,734,737,734,739,733,731,723,714,717,724,718,724,721,721,714,731,712,709,713,703,710,713,709,707]) +
  series('magenta', 0, [744,743,742,739,739,737,723,720,711,721,715,712,717,717,718,725,724,722,722,722,722,722,726,727,721,722,721,720,718,721,721,721,720,725,731,730,729,722,716,714,713,715,715,712,709,711]) +
  series('magenta', 127, [714,714,722,721,718,711,715,715,715,715,715,718,727,723,722,720,717,718,720,720,716,714,716,724,732,732,728,730,728,729,729,728,732,725,726,721,717,726,726,726,728,729,729,727,731,724,717,717,714,714,716,715]));

// ---- MACD histogram and lines ----
const macd = [52,54,57,66,66,62,58,56,48,36,32,42,42,38,28,24,23,21,14,15,12,7,4,5,15,19,31,37,38,32,29,20,10,-3,-8,-13,-19,-14,8,29,42,37,
  38,39,44,42,38,35,22,14,8,5,7,4,-7,-20,-34,-44,-46,-41,-33,-28,-26,-14,-11,-11,-17,-22,-17,-16,-12,-7,-6,-5,-7,-30,-39,-41,-37,-35,-40,-32,-21,-9,
  0,5,6,13,1,-5,-9,-9,-3,-3,-1,5,6,3,5,4,9,3,3,-5,-9,-11,-4,3,4,-3,1,4,9,9,9,9,14,20,20,19,15,17,20,22,19,16,11,11,
  15,14,14,13,12,10,8,9,6,3,-2,-10,-7,-6,-2,1,5,6,7,9,13,8,2,-8,-19,-17,-19,-16,-16,-13,-13,-5,-2,6,12,7,4,4,2,-1,1,4,0,12,32,38,40,33,27,21,18];
put('macd', [846, 876, 907, 937].map(y => hline(y)).join('') +
  macd.map((h, i) => rect('violet', x(i), h > 0 ? 877 - h : 877, 1, Math.abs(h))).join('') +
  line('orange', '343,960 358,945 364,932 371,923 394,907 400,905 408,907 414,904 422,894 429,889 437,887 451,887 463,883 473,884 480,882 487,882 501,885 508,884 515,877 522,873 530,862 537,855 544,850 558,847 565,850 580,859 594,867 601,872 608,872 615,860 622,846 630,836 640,830 651,822 658,813 664,810 680,805 693,810 709,813 716,811 724,812 738,827 751,848 759,856 767,858 781,859 788,862 794,857 805,857 809,858 823,869 830,869 838,870 852,867 867,869 873,871 881,885 888,896 895,902 909,908 917,914 924,914 931,911 944,902 967,893 974,899 994,907 1001,903 1015,903 1024,900 1052,898 1060,895 1075,897 1089,905 1096,907 1103,902 1118,899 1126,903 1146,896 1167,892 1182,882 1203,878 1225,867 1248,867 1260,861 1280,858 1309,856 1331,858 1339,865 1354,864 1374,859 1396,854 1404,851 1418,855 1432,868 1452,873 1475,877 1496,871 1503,864 1526,866 1539,868 1561,867 1568,857 1575,845 1590,832 1618,830') +
  line('cyan', '343,986 358,973 371,958 394,935 400,929 414,921 433,908 451,899 473,892 490,887 508,887 522,882 530,878 543,870 558,862 571,858 588,859 608,865 615,864 630,857 640,849 660,834 680,821 693,817 716,815 728,815 738,818 758,833 767,839 788,849 809,853 838,862 873,867 888,876 905,888 931,901 944,902 967,899 995,902 1024,902 1060,898 1081,898 1096,902 1134,902 1171,896 1207,883 1232,875 1252,872 1280,864 1296,862 1325,858 1346,861 1374,861 1396,858 1418,855 1432,859 1457,867 1481,872 1496,872 1518,868 1561,867 1575,862 1596,848 1618,839'));
```
